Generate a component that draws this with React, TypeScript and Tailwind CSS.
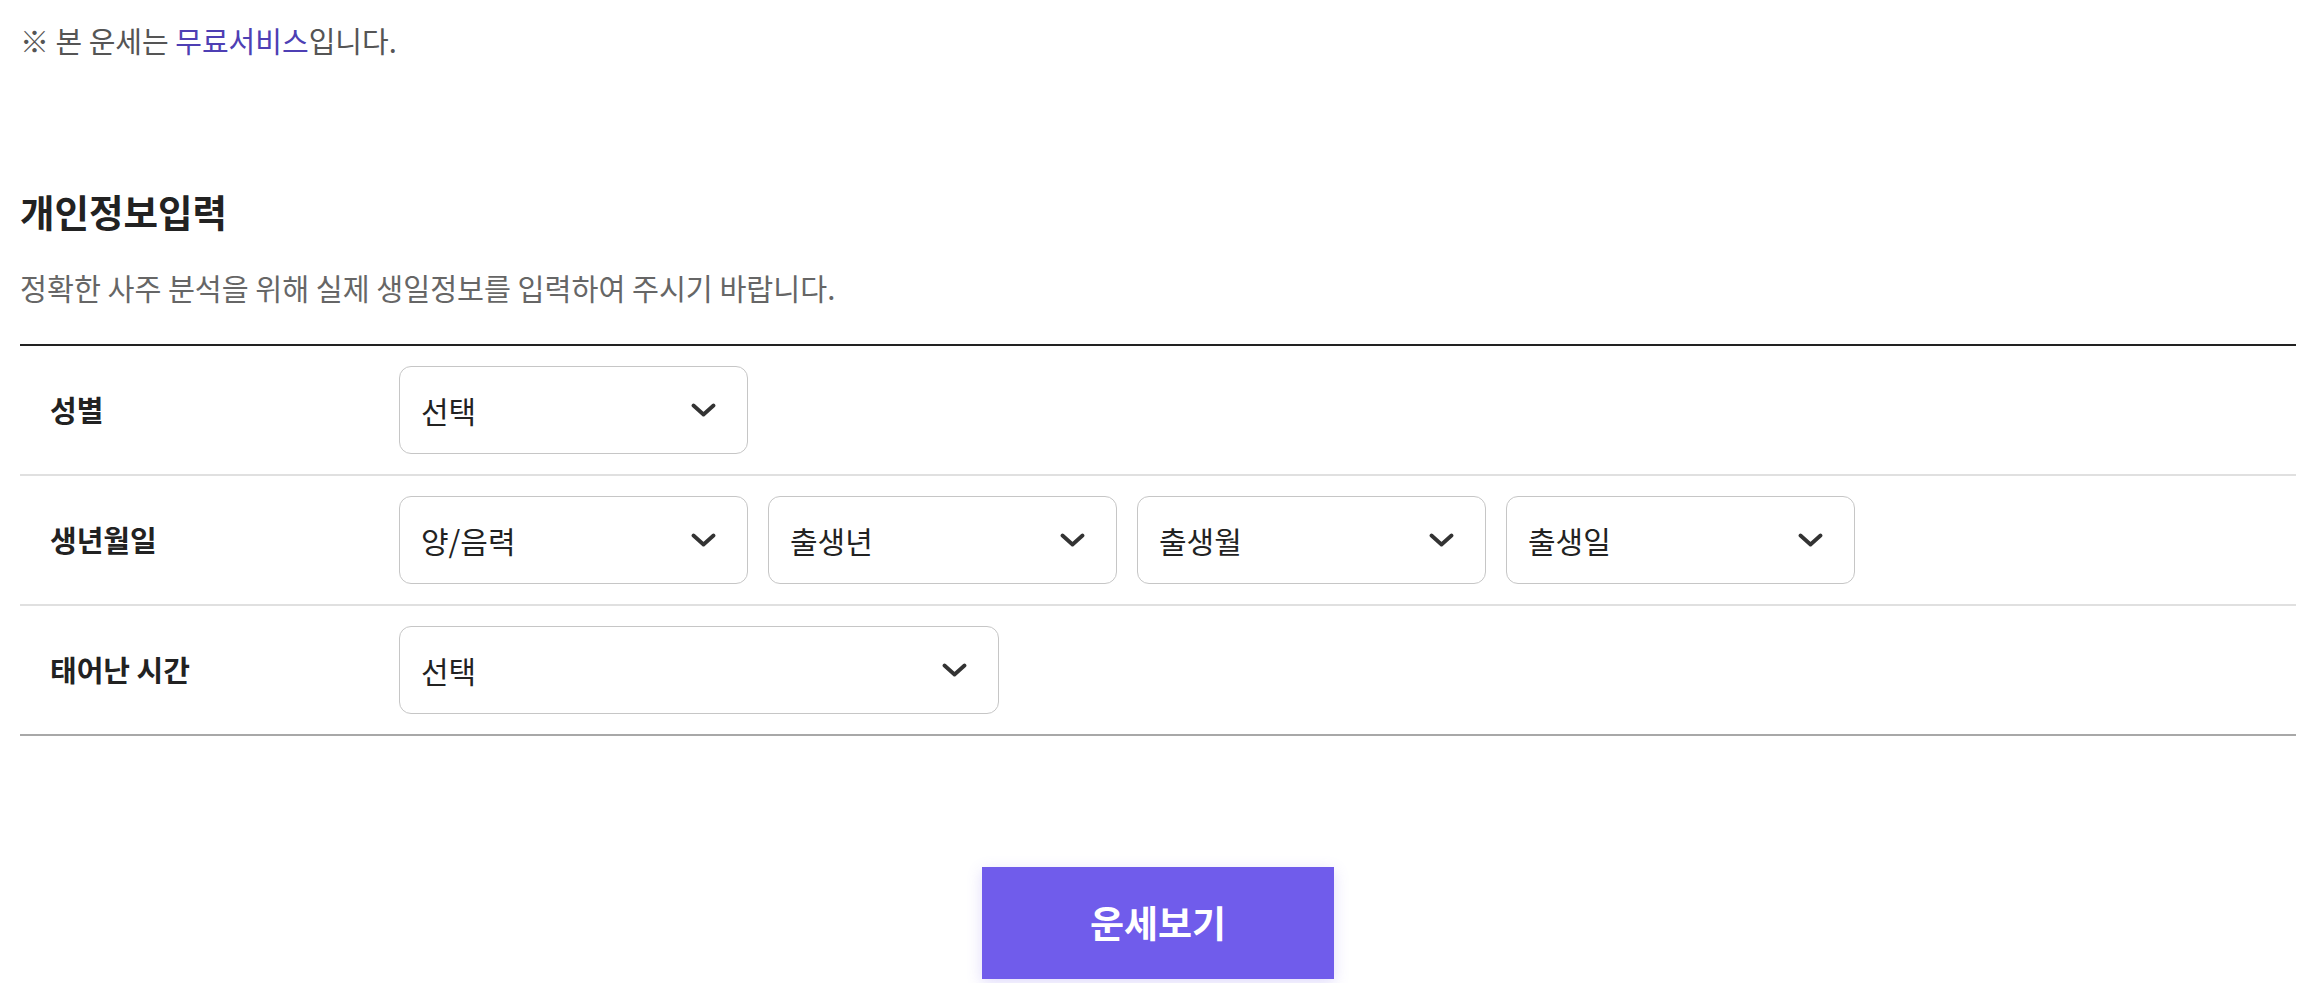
import { useState } from "react";

const font = { fontFamily: '"Noto Sans CJK KR", "Noto Sans", sans-serif' };

const Chevron = () => (
  <svg width="25" height="14" viewBox="0 0 25 14" fill="none">
    <polyline points="2.5,2.5 12.5,11.5 22.5,2.5" stroke="#333" strokeWidth="3.8" strokeLinecap="round" strokeLinejoin="round" />
  </svg>
);

const SelectBox = ({ label, wide = false }: { label: string; wide?: boolean }) => (
  <div
    className={`${wide ? "w-[600px]" : "w-[349px]"} h-[88px] flex items-center justify-between pl-[21px] pr-[31px] border-[1.5px] border-[#c6c6c6] rounded-[12px] bg-white cursor-pointer`}
  >
    <span className="text-[30px] text-[#222]">{label}</span>
    <Chevron />
  </div>
);

const rows = [
  { title: "성별", fields: [{ label: "선택" }] },
  { title: "생년월일", fields: [{ label: "양/음력" }, { label: "출생년" }, { label: "출생월" }, { label: "출생일" }] },
  { title: "태어난 시간", fields: [{ label: "선택", wide: true }] },
];

const App = () => {
  const [submitted, setSubmitted] = useState(false);

  return (
    <div className="min-h-screen bg-white px-[20px]" style={font}>
      <p className="pt-[20px] text-[29px] leading-[40px] text-[#555]">
        ※ 본 운세는 <span className="text-[#4e3fb4]">무료서비스</span>입니다.
      </p>

      <h2 className="mt-[131px] text-[37.5px] leading-[40px] font-bold text-[#222]">개인정보입력</h2>
      <p className="mt-[36px] text-[29.3px] leading-[40px] text-[#666]">
        정확한 사주 분석을 위해 실제 생일정보를 입력하여 주시기 바랍니다.
      </p>

      <div className="mt-[37px] border-t-2 border-[#222]">
        {rows.map((row, i) => (
          <div
            key={row.title}
            className={`h-[130px] flex items-center border-b-2 ${i === rows.length - 1 ? "border-[#a8a8a8]" : "border-[#e0e0e0]"}`}
          >
            <div className="w-[379px] pl-[30px] text-[29px] font-semibold text-[#222]">{row.title}</div>
            <div className="flex gap-[20px]">
              {row.fields.map((f, j) => (
                <SelectBox key={j} label={f.label} wide={"wide" in f && f.wide} />
              ))}
            </div>
          </div>
        ))}
      </div>

      <div className="flex justify-center mt-[131px]">
        <button
          onClick={() => setSubmitted(!submitted)}
          className="w-[352px] h-[112px] bg-[#705ceb] text-white text-[37px] font-bold shadow-[0_4px_14px_rgba(112,92,235,0.22)]"
        >
          운세보기
        </button>
      </div>
    </div>
  );
};

export default App;
